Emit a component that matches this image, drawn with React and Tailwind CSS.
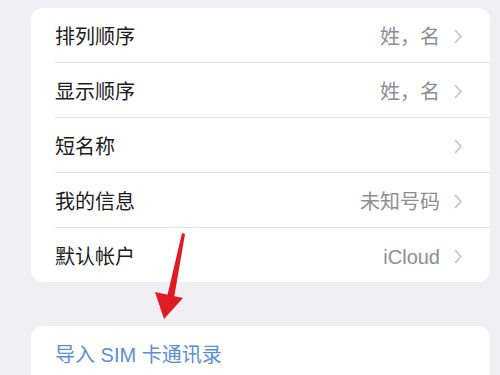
import React from "react";

const rows = [
  { label: "排列顺序", value: "姓，名" },
  { label: "显示顺序", value: "姓，名" },
  { label: "短名称", value: "" },
  { label: "我的信息", value: "未知号码" },
  { label: "默认帐户", value: "iCloud" },
];

const Chevron = () => (
  <svg width="9" height="15" viewBox="0 0 9 15" fill="none" className="shrink-0">
    <path d="M1.5 1.5 L7 7.5 L1.5 13.5" stroke="#c3c3c8" strokeWidth="1.6" strokeLinecap="round" strokeLinejoin="round" />
  </svg>
);

const App = () => {
  return (
    <div
      className="relative w-[500px] h-[375px] overflow-hidden bg-[#efeff4] pt-[8px]"
      style={{ fontFamily: '"Liberation Sans", "Noto Sans CJK SC", sans-serif' }}
    >
      {/* Settings card */}
      <div className="ml-[31px] w-[459px] rounded-[12px] bg-white overflow-hidden">
        {rows.map((row, i) => (
          <div key={row.label}>
            <div className="h-[54px] flex items-center pl-[24px] pr-[27px] pt-[3px]">
              <span className="text-[20px] leading-none text-[#1c1c1e]">{row.label}</span>
              <span className="ml-auto text-[20px] leading-none text-[#8e8e93]">{row.value}</span>
              <span className="ml-[14px]">
                <Chevron />
              </span>
            </div>
            {i < rows.length - 1 && <div className="ml-[24px] h-px bg-[#e3e3e6]" />}
          </div>
        ))}
      </div>

      {/* Import card */}
      <div className="ml-[31px] mt-[44px] w-[459px] h-[80px] rounded-[12px] bg-white">
        <div className="h-[55px] flex items-center pl-[24px] pt-[3px]">
          <span className="text-[20px] leading-none text-[#5b8fd8]">导入 SIM 卡通讯录</span>
        </div>
      </div>

      {/* Red annotation arrow */}
      <svg className="absolute left-0 top-0 pointer-events-none" width="500" height="375" viewBox="0 0 500 375">
        <polygon points="182,233 185,234 174,298 167,297" fill="#e01b24" />
        <polygon points="155,292 183,298 164,319" fill="#e01b24" />
      </svg>
    </div>
  );
};

export default App;
